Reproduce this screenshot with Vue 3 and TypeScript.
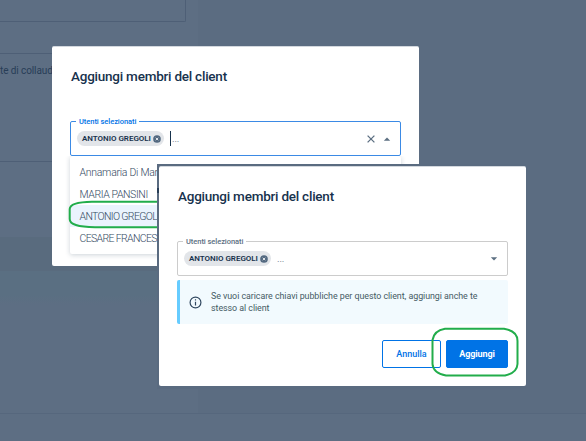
<script setup lang="ts">
const users: string[] = ['Annamaria Di Marco', 'MARIA PANSINI', 'ANTONIO GREGOLI', 'CESARE FRANCESCO']
const selected = 'ANTONIO GREGOLI'
</script>

<template>
  <main class="page">
    <div class="backdrop">
      <div class="shade"></div>
      <div class="box"></div>
      <div class="panel"><span>te di collaudo</span></div>
      <div class="gap"></div>
      <div class="band dark"></div>
      <div class="band teal"></div>
      <div class="footer"></div>
    </div>

    <section class="dialog first">
      <h2>Aggiungi membri del client</h2>
      <div class="field active">
        <span class="label">Utenti selezionati</span>
        <span class="chip">{{ selected }}
          <svg viewBox="0 0 10 10"><circle cx="5" cy="5" r="4.8" /><path d="M3.4 3.4 6.6 6.6M6.6 3.4 3.4 6.6" /></svg>
        </span>
        <i class="caret"></i><span class="dots">...</span>
        <svg class="clear" viewBox="0 0 10 10"><path d="M1.6 1.6 8.4 8.4M8.4 1.6 1.6 8.4" /></svg>
        <svg class="arrow" viewBox="0 0 8 4"><path d="M.8 3.7 4 .4 7.2 3.7Z" /></svg>
      </div>
      <ul class="menu">
        <li v-for="user in users" :key="user" :class="{ current: user === selected, caps: user === user.toUpperCase() }">{{ user }}</li>
      </ul>
      <svg class="mark" viewBox="0 0 100 32"><path d="M100 2.7H24Q2 3 1.7 10V20Q1.5 28 27 28.2H100" /></svg>
    </section>

    <div class="slab"></div>

    <section class="dialog second">
      <h2>Aggiungi membri del client</h2>
      <div class="field">
        <span class="label">Utenti selezionati</span>
        <span class="chip">{{ selected }}
          <svg viewBox="0 0 10 10"><circle cx="5" cy="5" r="4.8" /><path d="M3.4 3.4 6.6 6.6M6.6 3.4 3.4 6.6" /></svg>
        </span>
        <span class="dots">...</span>
        <svg class="arrow" viewBox="0 0 8 4"><path d="M.8.3 4 3.6 7.2.3Z" /></svg>
      </div>
      <div class="info">
        <svg viewBox="0 0 12 12"><circle cx="6" cy="6" r="5" /><path d="M6 5.3V8.8M6 3V4.2" /></svg>
        <p>Se vuoi caricare chiavi pubbliche per questo client, aggiungi anche te<br />stesso al client</p>
      </div>
      <div class="actions">
        <button class="cancel">Annulla</button>
        <button class="confirm">Aggiungi</button>
      </div>
      <svg class="ring" viewBox="0 0 88 50"><path d="M14 1.7H73Q86.5 4 86.5 14V37Q86 46 74 48.5H15Q2 46 1.5 37V13Q3 3.5 14 1.7Z" /></svg>
    </section>
  </main>
</template>

<style>
body { overflow: hidden; }
</style>

<style scoped>
* { box-sizing: border-box; }
.page { position: relative; width: 586px; height: 441px; overflow: hidden; background: #5d6e83; font-family: Roboto, "Liberation Sans", sans-serif; color: #17324d; }
.backdrop { display: flex; flex-direction: column; height: 441px; }
.shade { position: absolute; left: 198px; right: 0; top: 0; height: 413px; background: #5b6c81; }
.box { width: 186px; height: 22px; border: solid #4e5f76; border-width: 0 1px 1px 0; border-radius: 0 0 2px 0; }
.panel { width: 198px; height: 109px; margin-top: 31px; padding-top: 10px; border: solid #4e5f76; border-width: 1px 0; font-size: 10px; line-height: 13px; white-space: nowrap; color: #283d57; letter-spacing: -.1px; }
.gap { height: 75px; }
.band { width: 160px; height: 34px; }
.dark { background: #596b7e; }
.teal { background: linear-gradient(#5a6f82 70%, #5d6e83); }
.footer { margin-top: 108px; height: 28px; border-top: 1px solid #56677d; background: #5d6e83; }
.dialog { position: absolute; width: 367px; height: 220px; padding: 19px 18px 20px; border-radius: 2px; border-top: 1px solid #d3d8de; background: #fff; }
.first { left: 52px; top: 46px; }
.second { left: 159px; top: 166px; }
h2 { margin: 0; height: 21px; padding-left: 1px; font-size: 13.5px; line-height: 21px; font-weight: 500; letter-spacing: -.23px; white-space: nowrap; }
.field { position: relative; display: flex; align-items: center; height: 35px; margin-top: 34px; padding: 0 9px 0 6px; border: 1px solid #ccc; border-radius: 2px; }
.active { border-color: #3b8ae5; }
.label { position: absolute; left: 5px; top: -6px; padding: 0 3px; background: #fff; font-size: 7.5px; line-height: 11px; font-weight: 500; letter-spacing: -.05px; color: #5c6f82; white-space: nowrap; }
.active .label { color: #0073e6; }
.chip { display: flex; align-items: center; justify-content: space-between; width: 87px; height: 15px; padding: 0 3px 0 5px; border-radius: 8px; background: #e2e5e9; font-size: 8px; font-weight: 600; letter-spacing: -.03px; white-space: nowrap; }
.chip svg { width: 8px; height: 8px; fill: #536980; }
.chip path { stroke: #e5e8eb; stroke-width: 1.2; }
.caret { width: 1px; height: 15px; margin-left: 6px; background: #17324d; }
.dots { margin-left: 1px; font-size: 9.5px; color: #5c6f82; letter-spacing: -.1px; }
.second .dots { margin-left: 6px; }
.clear { width: 10px; height: 10px; margin-left: auto; fill: none; stroke: #5c6f82; stroke-width: 1.3; }
.arrow { width: 8px; height: 4px; margin-left: 7px; fill: #5c6f82; }
.second .arrow { margin-left: auto; }
.menu { height: 98px; margin: 0; padding: 5px 0; list-style: none; border-radius: 2px; box-shadow: 0 1px 5px #17324d38; clip-path: inset(0 -6px -8px); }
.menu li { height: 22px; padding-left: 9.5px; font-size: 10.5px; line-height: 24px; font-weight: 300; color: #33495f; letter-spacing: -.28px; white-space: nowrap; }
.menu .caps { letter-spacing: -.4px; }
.menu .caps:nth-child(n + 3) { letter-spacing: -.65px; }
.menu .current { background: #eaf3fd; }
.mark { position: absolute; left: 16px; top: 152px; width: 100px; height: 32px; fill: none; stroke: #22ad4b; stroke-width: 2; }
.slab { position: absolute; left: 157px; top: 164px; width: 369px; height: 225px; background: linear-gradient(#283d57, #283d57) 0 24px / 2px 5px no-repeat #5a6b80; }
.info { display: flex; align-items: center; height: 44px; margin-top: 4px; padding-left: 9px; border-left: 3px solid #6cf; border-radius: 2px; background: #f2fafe; }
.info svg { width: 13px; height: 13px; fill: none; stroke: #30475f; stroke-width: 1.1; }
.info p { margin: 0 0 1px 9px; font-size: 8.9px; line-height: 12px; letter-spacing: -.05px; color: #455a64; white-space: nowrap; }
.actions { display: flex; justify-content: flex-end; gap: 5px; margin-top: 16px; }
button { height: 28px; padding: 0; border: 1px solid #0073e6; border-radius: 2px; font: 500 9px Roboto, sans-serif; white-space: nowrap; }
.cancel { width: 59px; background: #fff; color: #0073e6; }
.confirm { width: 62px; background: #0073e6; color: #fff; font-weight: 700; letter-spacing: -.1px; }
.ring { position: absolute; left: 272px; top: 160px; width: 88px; height: 50px; fill: none; stroke: #22ad4b; stroke-width: 2; }
</style>
